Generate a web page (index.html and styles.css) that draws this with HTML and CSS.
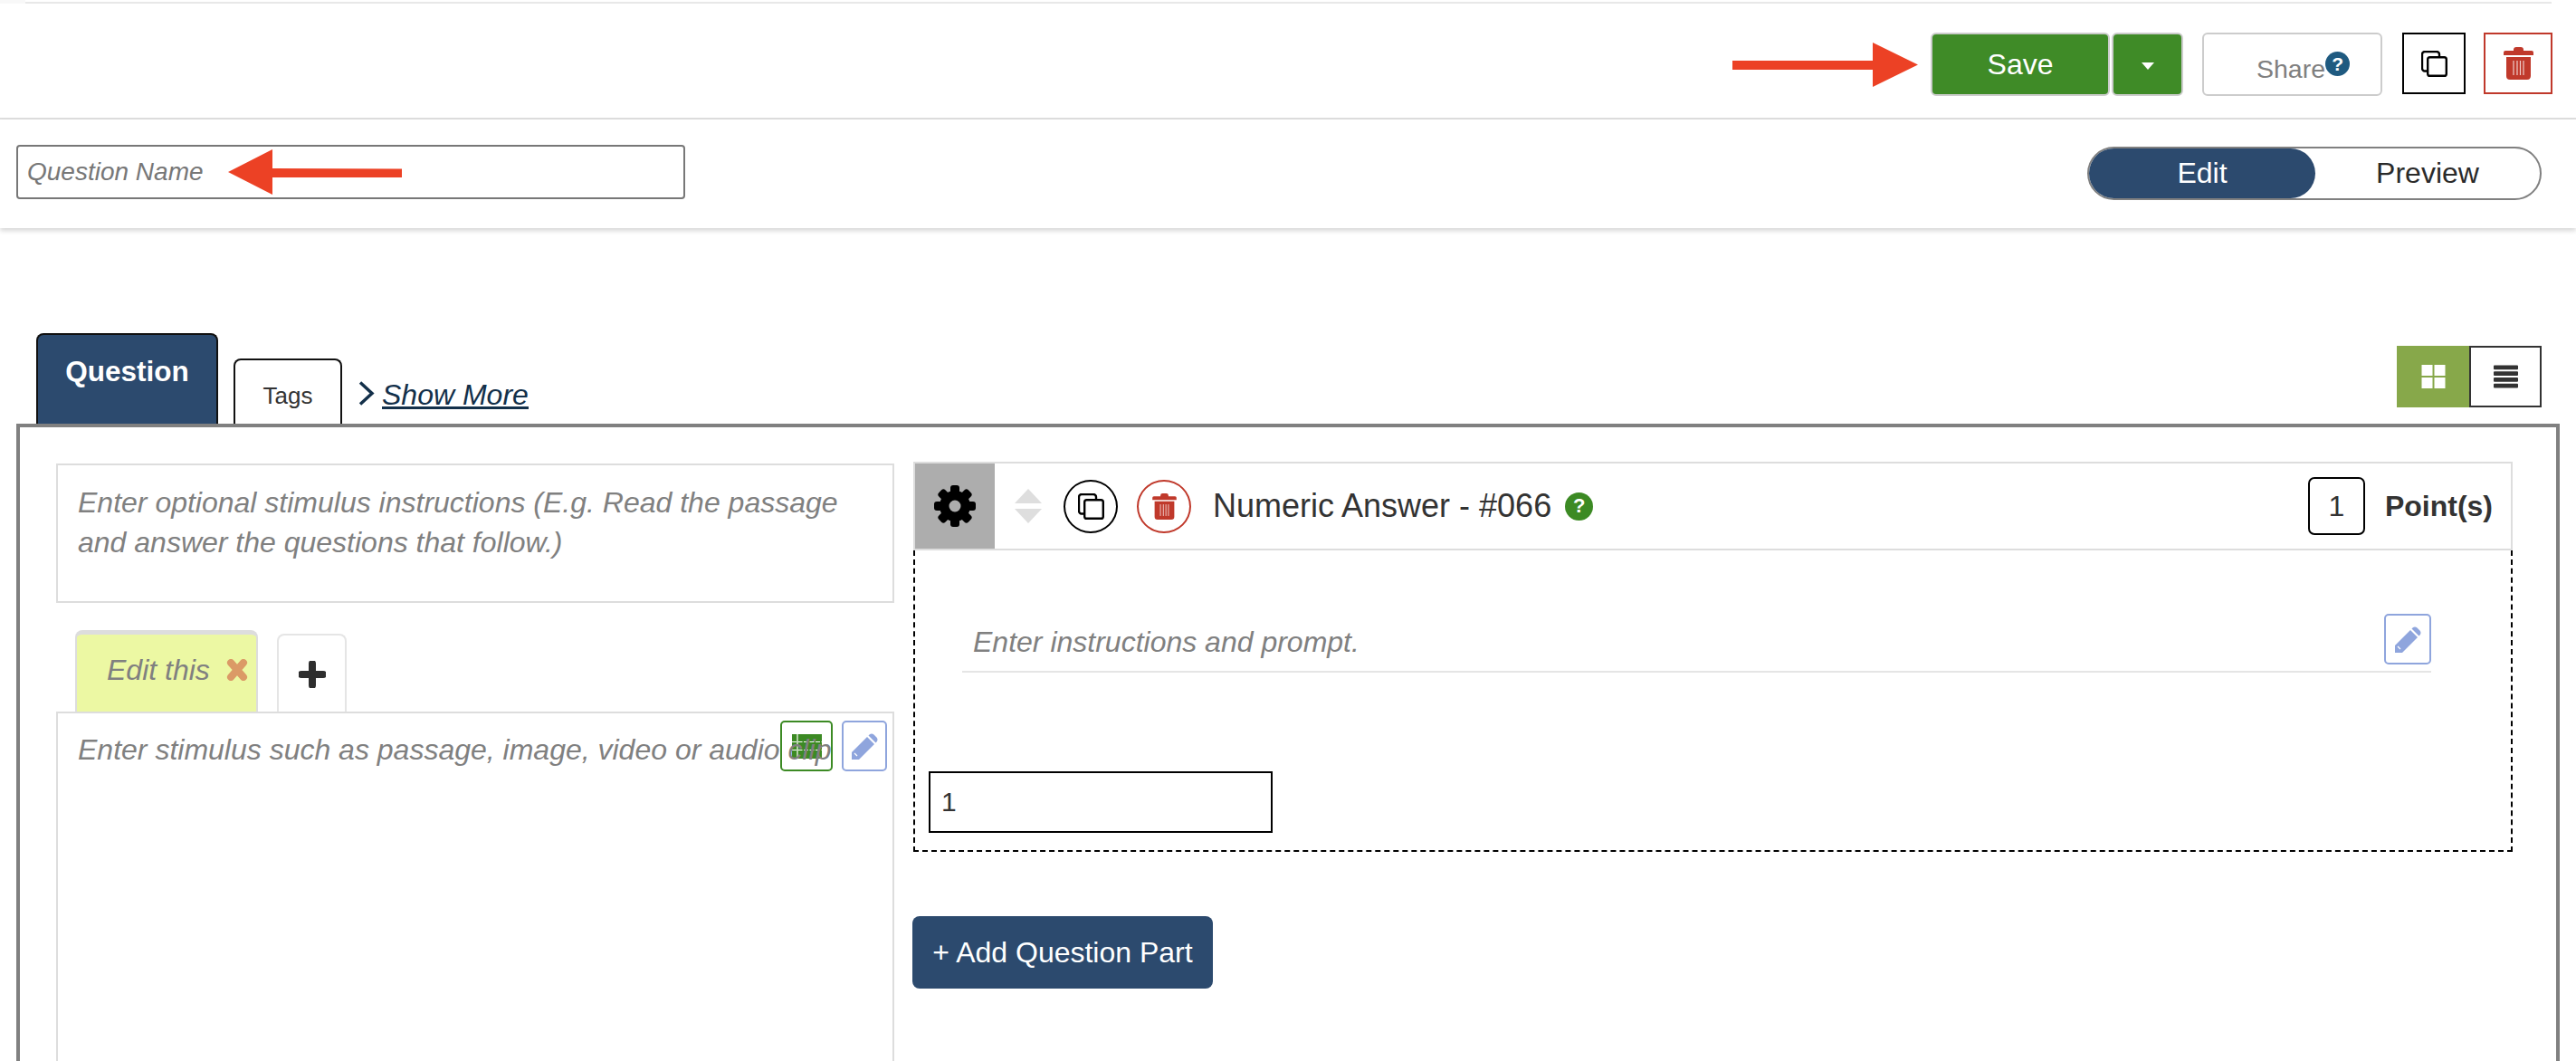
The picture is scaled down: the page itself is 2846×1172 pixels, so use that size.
FILE: index.html
```html
<!DOCTYPE html>
<html lang="en">
<head>
<meta charset="utf-8">
<title>Question editor</title>
<link rel="stylesheet" href="styles.css">
</head>
<body>
<svg class="defs" width="0" height="0" aria-hidden="true">
  <symbol id="i-copy" viewBox="0 0 29 29">
    <path d="M6 22.500H4a3 3 0 0 1-3-3V4a3 3 0 0 1 3-3h13a3 3 0 0 1 3 3v2" fill="none" stroke="currentColor" stroke-width="2.400"/>
    <rect x="7.200" y="7.200" width="20.600" height="20.600" rx="2.400" fill="none" stroke="currentColor" stroke-width="2.400"/>
  </symbol>
  <symbol id="i-trash" viewBox="0 0 33 36">
    <path fill="currentColor" d="M11 4V3a3 3 0 0 1 3-3h5a3 3 0 0 1 3 3v1h9a2 2 0 0 1 2 2v3H0V6a2 2 0 0 1 2-2zM3 11h27v21a4 4 0 0 1-4 4H7a4 4 0 0 1-4-4z"/>
    <path stroke="#fff" stroke-opacity=".75" stroke-width="1.200" d="M11 15v16M15 15v16M18.500 15v16M22 15v16"/>
  </symbol>
  <symbol id="i-pencil" viewBox="0 0 29 29">
    <path fill="currentColor" d="M0 21 17 4l8 8L8 29H0zM18.500 2.500l1-1a4 4 0 0 1 5 0l3 3a4 4 0 0 1 0 5l-1 1z"/>
    <path stroke="#fff" stroke-width="1.300" d="M3 22l3 3"/>
  </symbol>
</svg>

<div class="page">
  <div class="topline"></div>
  <header class="toolbar">
    <button class="btn save" type="button">Save</button>
    <button class="btn caret" type="button"><span class="caret-mark"></span></button>
    <button class="btn share" type="button"><span class="share-label">Share</span><span class="help help-blue">?</span></button>
    <button class="square copy" type="button"><svg class="copy-icon"><use href="#i-copy"/></svg></button>
    <button class="square trash" type="button"><svg class="trash-icon"><use href="#i-trash"/></svg></button>
  </header>

  <section class="namebar">
    <div class="name-input">Question Name</div>
    <div class="toggle"><span class="toggle-on">Edit</span><span class="toggle-off">Preview</span></div>
  </section>

  <nav class="tabrow">
    <div class="tab-active">Question</div>
    <div class="tab-plain">Tags</div>
    <a class="showmore" href="#"><svg class="chevron" viewBox="0 0 18 27"><path d="M2 1.500 15 13.500 2 25.500" fill="none" stroke="#13304a" stroke-width="3.500"/></svg><span class="showmore-text">Show More</span></a>
    <div class="view-switch">
      <span class="view view-on"><svg class="view-icon" viewBox="0 0 26 26"><path fill="#fff" d="M0 0h12v12H0zM14 0h12v12H14zM0 14h12v12H0zM14 14h12v12H14z"/></svg></span>
      <span class="view view-off"><svg class="view-icon" viewBox="0 0 28 26"><path fill="#333" d="M1 0h26a1 1 0 0 1 1 1v3a1 1 0 0 1-1 1H1a1 1 0 0 1-1-1V1a1 1 0 0 1 1-1zM1 7h26a1 1 0 0 1 1 1v3a1 1 0 0 1-1 1H1a1 1 0 0 1-1-1V8a1 1 0 0 1 1-1zM1 14h26a1 1 0 0 1 1 1v3a1 1 0 0 1-1 1H1a1 1 0 0 1-1-1v-3a1 1 0 0 1 1-1zM1 21h26a1 1 0 0 1 1 1v3a1 1 0 0 1-1 1H1a1 1 0 0 1-1-1v-3a1 1 0 0 1 1-1z"/></svg></span>
    </div>
  </nav>

  <main class="panel">
    <div class="left">
      <div class="instructions">Enter optional stimulus instructions (E.g. Read the passage and answer the questions that follow.)</div>
      <div class="stim-tabs">
        <div class="stim-tab"><span class="stim-tab-label">Edit this</span><svg class="stim-x" viewBox="0 0 24 24"><path d="M5 4l14 16M19 4 5 20" stroke="#db9a66" stroke-width="8" stroke-linecap="round"/></svg></div>
        <div class="stim-add"><svg class="plus" viewBox="0 0 30 30"><path d="M15 3v24M3 15h24" stroke="#2e2e2e" stroke-width="8" stroke-linecap="round"/></svg></div>
      </div>
      <div class="stimulus">
        <span class="stimulus-text">Enter stimulus such as passage, image, video or audio clip</span>
        <div class="stim-tools">
          <span class="tool tool-green"><svg class="table-icon" viewBox="0 0 33 27"><path fill="#3c8a24" d="M0 0h33v27H0z"/><path stroke="#fff" stroke-width="1.200" stroke-dasharray="5 1.500" d="M0 8.500h33M0 17.500h33"/><path stroke="#fff" stroke-width="1.200" d="M6 0v27"/></svg></span>
          <span class="tool tool-blue"><svg class="pencil-icon"><use href="#i-pencil"/></svg></span>
        </div>
      </div>
    </div>

    <div class="right">
      <div class="part-head">
        <span class="gear-box"><svg class="gear" viewBox="0 0 46 46">
          <g fill="#000">
            <circle cx="23" cy="23" r="17"/>
            <rect x="18" y="0" width="10" height="46" rx="3"/>
            <rect x="18" y="0" width="10" height="46" rx="3" transform="rotate(45 23 23)"/>
            <rect x="18" y="0" width="10" height="46" rx="3" transform="rotate(90 23 23)"/>
            <rect x="18" y="0" width="10" height="46" rx="3" transform="rotate(135 23 23)"/>
          </g>
          <circle cx="23" cy="23" r="6.500" fill="#adadad"/>
        </svg></span>
        <svg class="updown" viewBox="0 0 30 38"><path fill="#dedede" d="M15 0l15 16H0zM0 22h30L15 38z"/></svg>
        <span class="round round-black"><svg class="round-copy"><use href="#i-copy"/></svg></span>
        <span class="round round-red"><svg class="round-trash"><use href="#i-trash"/></svg></span>
        <span class="part-title">Numeric Answer - #066</span>
        <span class="help help-green">?</span>
        <span class="points-box">1</span>
        <span class="points-label">Point(s)</span>
      </div>
      <div class="part-body">
        <div class="prompt">
          <span class="prompt-text">Enter instructions and prompt.</span>
          <span class="tool tool-blue tool-prompt"><svg class="pencil-icon"><use href="#i-pencil"/></svg></span>
        </div>
        <div class="answer">1</div>
      </div>
      <button class="add-part" type="button">+ Add Question Part</button>
    </div>
  </main>

  <svg class="arrow arrow-save" viewBox="0 0 205 50"><path fill="#ec4125" d="M0 20h155V0l50 24.500L155 49V30H0z"/></svg>
  <svg class="arrow arrow-name" viewBox="0 0 192 50"><path fill="#ec4125" d="M0 25 49 0v21l143 .500V31L49 31v19z"/></svg>
</div>
</body>
</html>
```
FILE: styles.css
```css
* { box-sizing: border-box; }
html, body { margin: 0; padding: 0; background: #fff; }
body { font-family: "Liberation Sans", Arial, sans-serif; color: #333; }
button { font-family: inherit; padding: 0; margin: 0; cursor: pointer; }
.defs { position: absolute; }

.page { position: relative; width: 2846px; height: 1172px; overflow: hidden; }
.topline { width: 2819px; height: 4px; border-left: 28px solid #f8f8f8; background: linear-gradient(#fff 2px, #e8e8e8 2px); }

/* top toolbar */
.toolbar { display: flex; justify-content: flex-end; align-items: flex-start; height: 128px; padding: 32px 26px 0 0; border-bottom: 2px solid #dedede; }
.btn { height: 70px; border: 2px solid #ccc; border-radius: 6px; }
.save { width: 198px; background: #3f8b27; color: #fff; font-size: 32px; }
.caret { width: 79px; margin-left: 2px; background: #3f8b27; display: flex; align-items: center; justify-content: center; padding-top: 4px; }
.caret-mark { width: 0; height: 0; border-left: 7.500px solid transparent; border-right: 7.500px solid transparent; border-top: 8px solid #fff; }
.share { width: 199px; margin-left: 21px; background: #fff; color: #808080; font-size: 28.500px; display: flex; padding: 16px 0 0 58px; align-items: flex-start; }
.share-label { line-height: 44px; }
.help { display: flex; align-items: center; justify-content: center; border-radius: 50%; color: #fff; font-weight: 700; }
.help-blue { width: 27px; height: 27px; margin: 3px 0 0 0; background: #1f5a80; font-size: 21px; }
.square { width: 70px; height: 70px; background: #fff; display: flex; align-items: center; justify-content: center; border-radius: 0; }
.copy { margin-left: 22px; border: 2px solid #000; height: 68px; color: #000; }
.trash { width: 76px; height: 68px; margin-left: 20px; border: 2px solid #c0392b; color: #c0392b; }
.copy-icon { width: 29px; height: 29px; }
.trash-icon { width: 33px; height: 36px; }

/* name row */
.namebar { display: flex; justify-content: space-between; align-items: flex-start; height: 120px; padding: 28px 38px 0 18px; box-shadow: 0 3px 5px rgba(0, 0, 0, .16); }
.name-input { width: 739px; height: 60px; border: 2px solid #777; border-radius: 4px; padding-left: 10px; font-size: 28px; line-height: 56px; font-style: italic; color: #777; }
.toggle { display: flex; width: 502px; height: 59px; margin-top: 2px; border: 2px solid #808080; border-radius: 30px; font-size: 32px; line-height: 55px; text-align: center; }
.toggle-on { width: 250px; background: #2c4a6e; color: #fff; border-radius: 28px; }
.toggle-off { flex: 1; color: #2a2a2a; }

/* tabs */
.tabrow { display: flex; align-items: flex-end; height: 216px; padding: 0 38px 0 40px; }
.tab-active { width: 201px; height: 100px; background: #2c4a6e; border: 2px solid #111; border-bottom: 0; border-radius: 8px 8px 0 0; color: #fff; font-size: 31.500px; font-weight: 700; text-align: center; padding-top: 22px; }
.tab-plain { width: 120px; height: 72px; margin-left: 17px; border: 2px solid #111; border-bottom: 0; border-radius: 8px 8px 0 0; font-size: 26px; text-align: center; padding-top: 24px; }
.showmore { display: flex; align-items: flex-start; align-self: flex-end; height: 47px; margin-left: 18px; color: #13304a; font-size: 32px; font-style: italic; }
.chevron { width: 18px; height: 27px; }
.showmore-text { margin-left: 8px; line-height: 30px; text-decoration: underline; }
.view-switch { display: flex; margin-left: auto; margin-bottom: 18px; }
.view { width: 80px; height: 68px; display: flex; align-items: center; justify-content: center; }
.view-on { background: #87a84a; }
.view-off { border: 2px solid #333; }
.view-icon { width: 27px; height: 26px; }

/* panel */
.panel { display: grid; grid-template-columns: 926px 1767px; column-gap: 21px; align-items: start; margin: 0 18px; height: 900px; border: 4px solid #808080; padding: 38px 48px 0 40px; }
.left { padding-top: 2px; }
.instructions { height: 154px; border: 2px solid #ddd; padding: 19px 22px 0; font-size: 32px; line-height: 44px; font-style: italic; color: #808080; }
.stim-tabs { display: flex; align-items: flex-end; height: 121px; padding-left: 21px; }
.stim-tab { display: flex; align-items: center; width: 202px; height: 91px; background: #ecf8a3; border: 2px solid #ddd; border-top-width: 5px; border-bottom: 0; border-radius: 8px 8px 0 0; padding: 0 0 8px 33px; font-size: 32px; font-style: italic; color: #808080; }
.stim-x { width: 24px; height: 24px; margin-left: 18px; }
.stim-add { display: flex; align-items: center; justify-content: center; width: 77px; height: 87px; margin-left: 21px; border: 2px solid #e5e5e5; border-bottom: 0; border-radius: 8px 8px 0 0; }
.plus { width: 30px; height: 30px; }
.stimulus { position: relative; height: 500px; margin-top: -1px; border: 2px solid #ddd; padding: 20px 22px 0; font-size: 32px; line-height: 40px; font-style: italic; color: #808080; }
.stimulus-text { position: relative; z-index: 1; white-space: nowrap; }
.stim-tools { position: absolute; top: 8px; right: 6px; display: flex; gap: 10px; }
.tool { display: flex; align-items: center; justify-content: center; height: 56px; border: 2px solid; border-radius: 5px; }
.tool-green { width: 58px; border-color: #3c8a24; }
.tool-blue { width: 50px; border-color: #8fa5dd; color: #8fa5dd; background: #fff; }
.table-icon { width: 33px; height: 27px; }
.pencil-icon { width: 29px; height: 29px; }

.part-head { display: flex; align-items: center; height: 98px; border: 2px solid #ddd; padding-right: 20px; }
.gear-box { display: flex; align-items: center; justify-content: center; width: 88px; height: 94px; background: #adadad; }
.gear { width: 46px; height: 46px; }
.updown { width: 30px; height: 38px; margin-left: 22px; }
.round { display: flex; align-items: center; justify-content: center; width: 60px; height: 59px; border: 2px solid; border-radius: 50%; }
.round-black { margin-left: 24px; border-color: #000; color: #000; }
.round-red { margin-left: 21px; border-color: #c0392b; color: #c0392b; }
.round-copy { width: 29px; height: 29px; }
.round-trash { width: 27px; height: 29px; }
.part-title { margin-left: 24px; font-size: 36px; white-space: nowrap; color: #333; }
.help-green { width: 31px; height: 31px; margin-left: 15px; background: #3c8a24; font-size: 22px; }
.points-box { width: 63px; height: 64px; margin-left: auto; border: 2px solid #000; border-radius: 7px; font-size: 32px; line-height: 60px; text-align: center; }
.points-label { margin-left: 22px; font-size: 32px; font-weight: 700; }

.part-body { height: 333px; border: 2px dashed #000; border-top: 0; padding: 70px 88px 0 15px; }
.prompt { display: flex; justify-content: space-between; align-items: flex-start; height: 65px; margin-left: 37px; border-bottom: 2px solid #e5e5e5; padding-left: 12px; font-size: 32px; font-style: italic; color: #808080; }
.prompt-text { line-height: 62px; }
.tool-prompt { width: 52px; }
.answer { width: 380px; height: 68px; margin-top: 109px; border: 2px solid #000; padding-left: 12px; font-size: 30px; line-height: 64px; }
.add-part { display: block; width: 332px; height: 80px; margin: 71px 0 0 -1px; background: #2c4a6e; border: 0; border-radius: 8px; color: #fff; font-size: 32px; }

/* annotation arrows */
.arrow { position: absolute; }
.arrow-save { left: 1914px; top: 47px; width: 205px; height: 50px; }
.arrow-name { left: 252px; top: 165px; width: 192px; height: 50px; }
```
